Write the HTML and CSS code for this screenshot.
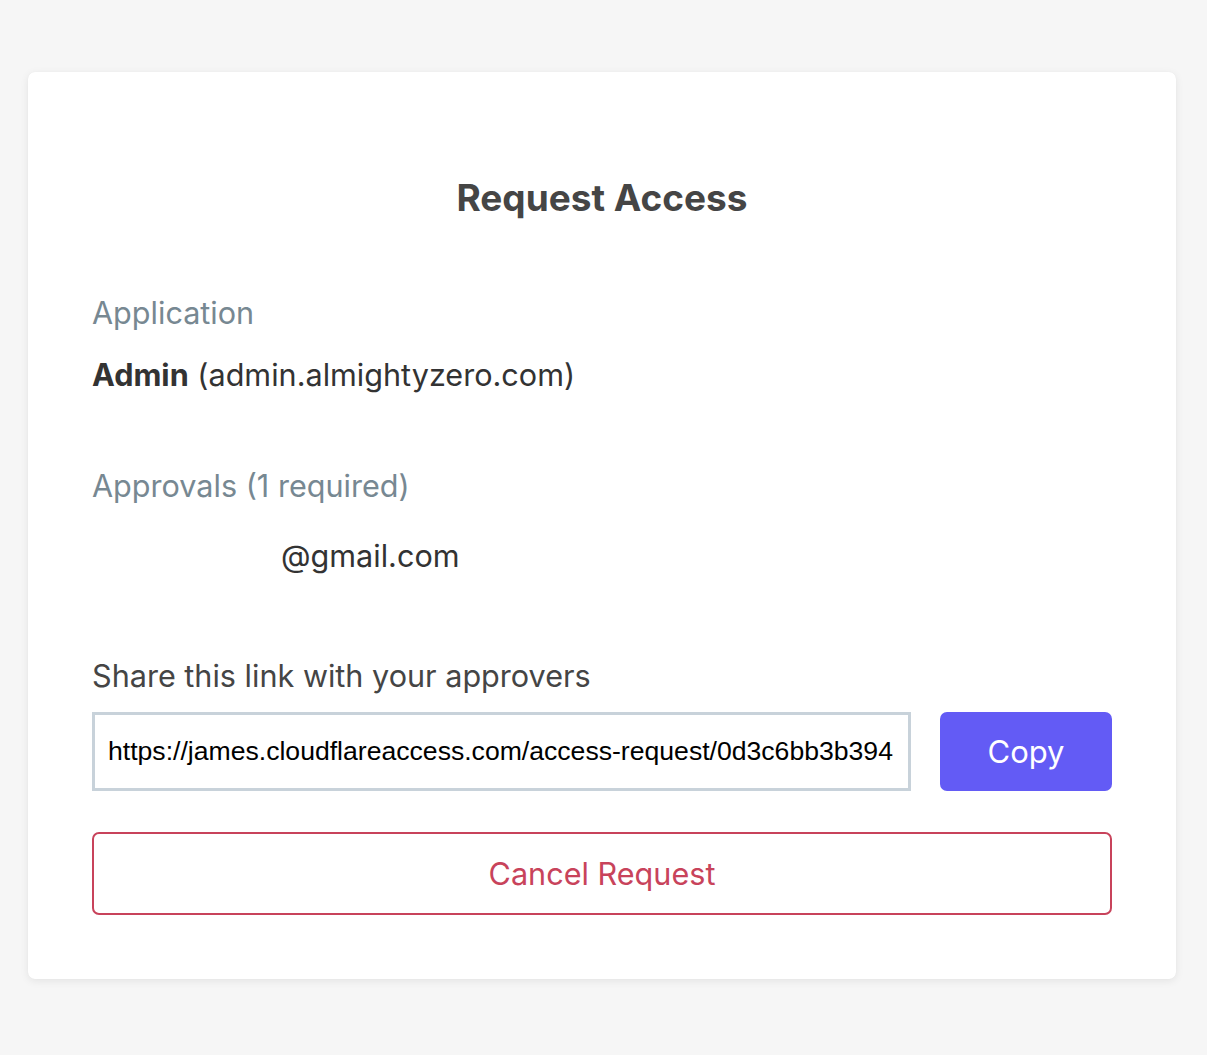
FILE: index.html
```html
<!DOCTYPE html>
<html lang="en">
<head>
<meta charset="utf-8">
<title>Request Access</title>
<link rel="stylesheet" href="styles.css">
</head>
<body>
<main class="page">
  <section class="card">
    <h1 class="title">Request Access</h1>
    <div class="label">Application</div>
    <div class="value"><strong>Admin</strong> (admin.almightyzero.com)</div>
    <div class="label label-approvals">Approvals (1 required)</div>
    <div class="value value-email"><span class="redacted"></span>@gmail.com</div>
    <div class="share">Share this link with your approvers</div>
    <div class="link-row">
      <input class="link-input" type="text" readonly value="https://james.cloudflareaccess.com/access-request/0d3c6bb3b394">
      <button class="btn-copy" type="button">Copy</button>
    </div>
    <button class="btn-cancel" type="button">Cancel Request</button>
  </section>
</main>
</body>
</html>
```

FILE: styles.css
```css
html, body {
  margin: 0;
  padding: 0;
  background: #f6f6f6;
}
body {
  font-family: Inter, "Noto Sans", sans-serif;
  color: #333;
}
.page {
  padding: 72px 31px 76px 28px;
}
.card {
  background: #fff;
  border-radius: 7px;
  box-shadow: 0 2px 8px rgba(0, 0, 0, 0.08), 0 0 1px rgba(0,0,0,0.06);
  padding: 104px 64px 64px 64px;
  display: flex;
  flex-direction: column;
}
.title {
  margin: 0;
  font-size: 37px;
  line-height: 44px;
  font-weight: 700;
  color: #454545;
  text-align: center;
}
.label {
  margin-top: 75px;
  font-size: 30.6px;
  line-height: 36px;
  color: #778892;
}
.value {
  margin-top: 26px;
  font-size: 30.6px;
  line-height: 36px;
  color: #333;
}
.value strong {
  font-weight: 700;
}
.label-approvals {
  margin-top: 75px;
}
.value-email {
  margin-top: 34px;
}
.redacted {
  display: inline-block;
  width: 189px;
}
.share {
  margin-top: 84px;
  font-size: 30.6px;
  line-height: 36px;
  color: #454545;
}
.link-row {
  margin-top: 18px;
  display: flex;
  gap: 29px;
}
.link-input {
  flex: 1;
  min-width: 0;
  height: 79px;
  box-sizing: border-box;
  border: 3px solid #c8d2da;
  border-radius: 0;
  padding: 0 13px;
  font-family: "Liberation Sans", Arial, sans-serif;
  font-size: 26.6px;
  color: #000;
  background: #fff;
  outline: none;
}
.btn-copy {
  width: 172px;
  height: 79px;
  border: none;
  border-radius: 7px;
  background: #635bf5;
  color: #fff;
  font-family: Inter, sans-serif;
  font-size: 31px;
  cursor: pointer;
}
.btn-cancel {
  margin-top: 41px;
  height: 83px;
  border: 2px solid #c8435b;
  border-radius: 7px;
  background: #fff;
  color: #c8435b;
  font-family: Inter, sans-serif;
  font-size: 30.6px;
  cursor: pointer;
}
```
